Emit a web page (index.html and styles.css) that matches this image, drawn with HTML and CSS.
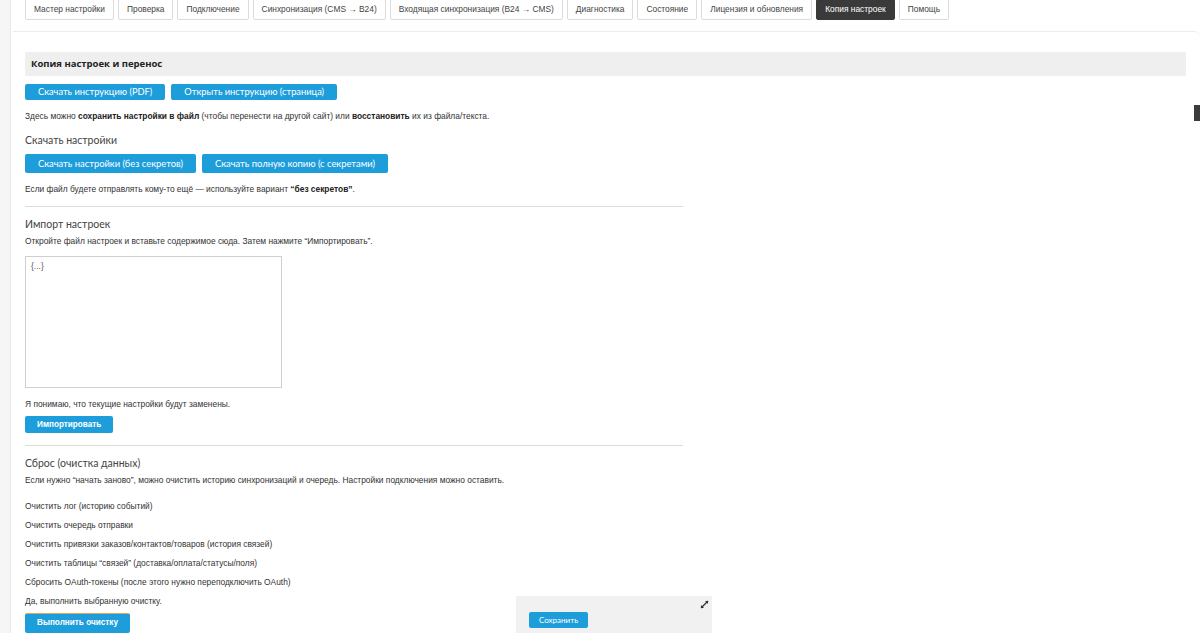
FILE: index.html
```html
<!DOCTYPE html>
<html lang="ru">
<head>
	<meta charset="UTF-8">
	<title>Копия настроек</title>
	<link rel="stylesheet" href="styles.css">
</head>
<body>
	<div class="layout">
		<div class="side"></div>
		<div class="main">
			<div class="tabs">
				<span class="tab">Мастер настройки</span>
				<span class="tab">Проверка</span>
				<span class="tab">Подключение</span>
				<span class="tab">Синхронизация (CMS → B24)</span>
				<span class="tab">Входящая синхронизация (B24 → CMS)</span>
				<span class="tab">Диагностика</span>
				<span class="tab">Состояние</span>
				<span class="tab">Лицензия и обновления</span>
				<span class="tab active">Копия настроек</span>
				<span class="tab">Помощь</span>
			</div>
			<div class="panel">
				<div class="head">Копия настроек и перенос</div>
				<div class="btns">
					<span class="btn">Скачать инструкцию (PDF)</span>
					<span class="btn">Открыть инструкцию (страница)</span>
				</div>
				<p class="note">Здесь можно <b>сохранить настройки в файл</b> (чтобы перенести на другой сайт) или <b>восстановить</b> их из файла/текста.</p>

				<h3 class="sub">Скачать настройки</h3>
				<div class="btns">
					<span class="btn big">Скачать настройки (без секретов)</span>
					<span class="btn big">Скачать полную копию (с секретами)</span>
				</div>
				<p class="note">Если файл будете отправлять кому-то ещё — используйте вариант <b>“без секретов”</b>.</p>

				<hr class="sep">

				<h3 class="sub">Импорт настроек</h3>
				<p class="note">Откройте файл настроек и вставьте содержимое сюда. Затем нажмите “Импортировать”.</p>
				<textarea class="area" placeholder="{...}"></textarea>
				<p class="label">Я понимаю, что текущие настройки будут заменены.</p>
				<span class="btn small">Импортировать</span>

				<hr class="sep after-btn">

				<h3 class="sub">Сброс (очистка данных)</h3>
				<p class="note">Если нужно “начать заново”, можно очистить историю синхронизаций и очередь. Настройки подключения можно оставить.</p>
				<ul class="checks">
					<li>Очистить лог (историю событий)</li>
					<li>Очистить очередь отправки</li>
					<li>Очистить привязки заказов/контактов/товаров (история связей)</li>
					<li>Очистить таблицы “связей” (доставка/оплата/статусы/поля)</li>
					<li>Сбросить OAuth-токены (после этого нужно переподключить OAuth)</li>
				</ul>
				<p class="label">Да, выполнить выбранную очистку.</p>
				<span class="btn small focus">Выполнить очистку</span>
			</div>
		</div>
	</div>

	<div class="savebar">
		<span class="btn save">Сохранить</span>
		<svg class="expand" width="9" height="9" viewBox="0 0 9 9">
			<path d="M1 8 L8 1" stroke="#333" stroke-width="1.2"/>
			<path d="M5 1 H8 V4 Z" fill="#333"/>
			<path d="M1 5 V8 H4 Z" fill="#333"/>
		</svg>
	</div>
	<div class="sidetab"></div>
</body>
</html>
```

FILE: styles.css
```css
*{
	box-sizing: border-box;
}
body{
	margin: 0;
	background: #fff;
	font-family: "Liberation Sans", Arial, sans-serif;
	color: #333;
	overflow: hidden;
}
.layout{
	display: flex;
	min-height: 633px;
}
.side{
	width: 11px;
	background: #f6f6f6;
	border-right: 1px solid #e9e9e9;
}
.main{
	flex: 1;
	padding-left: 2px;
}
.tabs{
	display: flex;
	gap: 4px;
	padding-left: 12px;
	margin-top: -1px;
}
.tab{
	height: 21px;
	line-height: 19px;
	padding: 0 8px;
	border: 1px solid #dcdcdc;
	border-radius: 2px;
	background: #fff;
	font-size: 8.4px;
	color: #444;
	white-space: nowrap;
}
.tab.active{
	background: #3a3a3a;
	border-color: #3a3a3a;
	color: #fff;
}
.panel{
	margin-top: 11px;
	border-top: 1px solid #ececec;
	border-radius: 0 6px 0 0;
	padding: 20px 14px 0 12px;
}
.head{
	height: 24px;
	line-height: 24px;
	padding-left: 6px;
	background: #efefef;
	border-radius: 2px;
	font-family: "Open Sans", sans-serif;
	font-weight: bold;
	font-size: 9.5px;
	color: #222;
}
.btns{
	display: flex;
	gap: 6px;
	margin-top: 8px;
}
.btn{
	display: inline-block;
	height: 16px;
	line-height: 16px;
	padding: 0 13px;
	background: #1e9ddb;
	border-radius: 2px;
	color: #fff;
	font-family: Lato, sans-serif;
	font-size: 9.3px;
	white-space: nowrap;
}
.btn.big{
	height: 19px;
	line-height: 19px;
	font-size: 9.4px;
}
.note{
	margin: 10px 0 0;
	font-size: 8.4px;
	line-height: 12px;
	color: #333;
}
.note b{
	color: #222;
}
.sub{
	margin: 10px 0 0;
	font-family: Lato, sans-serif;
	font-weight: normal;
	font-size: 10.5px;
	color: #444;
	line-height: 16px;
}
.sub + .btns{
	margin-top: 6px;
}
.sub + .note{
	margin-top: 3px;
}
.sep{
	width: 658px;
	margin: 11px 0 0;
	border: 0;
	border-top: 1px solid #dcdcdc;
}
.sep.after-btn{
	margin-top: 12px;
}
.sep + .sub{
	margin-top: 9px;
}
.area{
	display: block;
	width: 257px;
	height: 132px;
	margin-top: 9px;
	padding: 4px 5px;
	border: 1px solid #cfcfcf;
	resize: none;
	font-family: "Liberation Sans", Arial, sans-serif;
	font-size: 8.5px;
}
.area::placeholder{
	color: #555;
}
.label{
	margin: 10px 0 0;
	font-size: 8.4px;
	line-height: 12px;
	color: #333;
}
.btn.small{
	margin-top: 6px;
	height: 17px;
	line-height: 17px;
	padding: 0 12px;
	font-family: "Liberation Sans", Arial, sans-serif;
	font-size: 8.2px;
	font-weight: bold;
}
.btn.focus{
	border-top: 1px solid #e9a25b;
	height: 20px;
	line-height: 18px;
	padding: 0 12px;
}
.checks{
	list-style: none;
	margin: 14px 0 0;
	padding: 0;
	font-size: 8.4px;
	line-height: 12px;
	color: #333;
}
.checks li{
	margin-bottom: 7px;
}
.checks + .label{
	margin-top: 3px;
}
.savebar{
	position: absolute;
	left: 516px;
	top: 596px;
	width: 196px;
	height: 37px;
	background: #f2f1f1;
	padding: 13px 0 0 13px;
}
.btn.save{
	height: 16px;
	line-height: 16px;
	padding: 0 10px;
	font-size: 8px;
}
.expand{
	position: absolute;
	right: 3px;
	top: 4px;
}
.sidetab{
	position: absolute;
	right: 0;
	top: 105px;
	width: 6px;
	height: 16px;
	background: #3b3b3b;
}
```
